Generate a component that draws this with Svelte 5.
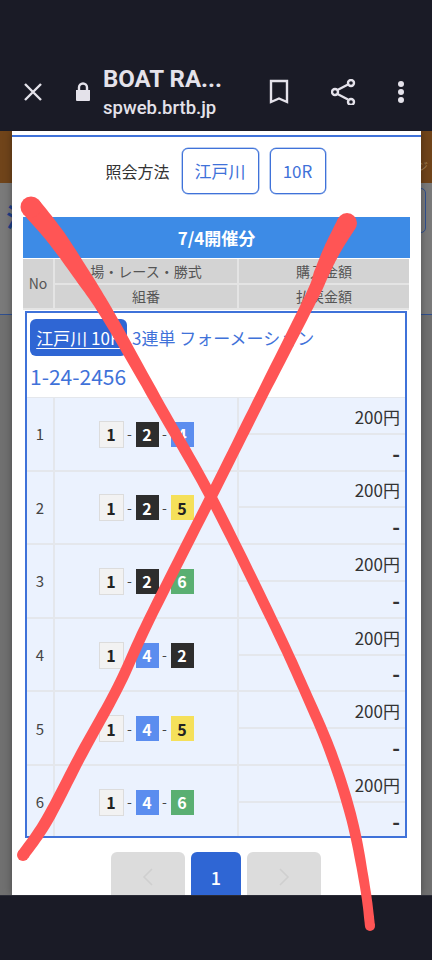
<script lang="ts">
    const rows = [
        { no: 1, boats: [1, 2, 4] },
        { no: 2, boats: [1, 2, 5] },
        { no: 3, boats: [1, 2, 6] },
        { no: 4, boats: [1, 4, 2] },
        { no: 5, boats: [1, 4, 5] },
        { no: 6, boats: [1, 4, 6] }
    ];

    // [x, y, width] along the hand-drawn strokes
    const strokeA = [[31, 207, 21], [55, 236, 19], [80, 272, 16.5], [109, 317, 13.5], [160, 407, 11.5], [211, 497, 11], [272, 620, 10.5], [303, 687, 10.5], [331, 753, 11], [352, 820, 11], [365, 887, 10], [370, 926, 10]];
    const strokeB = [[347, 223, 20], [333, 248, 17], [322, 272, 15], [311, 298, 13], [262, 395, 11.5], [211, 497, 11], [149, 620, 11], [118, 687, 11], [82, 753, 11.5], [47, 820, 12], [23, 855, 12]];

    // catmull-rom so the strokes come out curved, not kinked
    function sample(pts: number[][]) {
        const out: number[][] = [];
        for (let i = 0; i < pts.length - 1; i++) {
            const p0 = pts[Math.max(i - 1, 0)];
            const p1 = pts[i];
            const p2 = pts[i + 1];
            const p3 = pts[Math.min(i + 2, pts.length - 1)];
            for (let s = 0; s < 12; s++) {
                const t = s / 12;
                out.push([0, 1, 2].map(k =>
                    0.5 * (2 * p1[k] + (p2[k] - p0[k]) * t +
                    (2 * p0[k] - 5 * p1[k] + 4 * p2[k] - p3[k]) * t * t +
                    (3 * p1[k] - p0[k] - 3 * p2[k] + p3[k]) * t * t * t)));
            }
        }
        out.push(pts[pts.length - 1]);
        return out;
    }

    function taper(raw: number[][]) {
        const pts = sample(raw);
        const left: string[] = [];
        const right: string[] = [];
        pts.forEach((p, i) => {
            const a = pts[Math.max(i - 1, 0)];
            const b = pts[Math.min(i + 1, pts.length - 1)];
            const dx = b[0] - a[0];
            const dy = b[1] - a[1];
            const len = Math.hypot(dx, dy);
            const nx = (-dy / len) * p[2] / 2;
            const ny = (dx / len) * p[2] / 2;
            left.push(`${(p[0] + nx).toFixed(1)} ${(p[1] + ny).toFixed(1)}`);
            right.unshift(`${(p[0] - nx).toFixed(1)} ${(p[1] - ny).toFixed(1)}`);
        });
        return 'M' + left.concat(right).join(' L') + ' Z';
    }
</script>

<div class="screen">
    <header class="topbar">
        <svg class="close" viewBox="0 0 20 20" width="20" height="20"><path d="M2 2 L18 18 M18 2 L2 18" /></svg>
        <svg class="lock" viewBox="0 0 16 20" width="16" height="20">
            <path class="fill" d="M1 8 H15 V18 Q15 19 14 19 H2 Q1 19 1 18 Z" />
            <path d="M4 8 V5.5 a4 4 0 0 1 8 0 V8" />
        </svg>
        <div class="title">
            <div class="name">BOAT RA...</div>
            <div class="url">spweb.brtb.jp</div>
        </div>
        <svg class="bookmark" viewBox="0 0 20 26" width="20" height="26"><path d="M2 2 H18 V23 L10 19.5 L2 23 Z" /></svg>
        <svg class="share" viewBox="0 0 26 26" width="26" height="26">
            <path d="M6.5 11 L17 5.5 M6.5 15 L17 20.5" />
            <circle cx="20" cy="4" r="3" /><circle cx="4" cy="13" r="3" /><circle cx="20" cy="23" r="3" />
        </svg>
        <div class="dots"><span></span><span></span><span></span></div>
    </header>

    <main class="viewport">
        <div class="page">
            <div class="banner"><span>ジ</span></div>
            <div class="page-head">
                <div class="page-title">江戸川</div>
                <div class="page-box"></div>
            </div>
            <div class="page-rest"></div>
        </div>

        <section class="modal">
            <div class="query">
                <span class="query-label">照会方法</span>
                <button class="pick wide">江戸川</button>
                <button class="pick">10R</button>
            </div>

            <div class="day">7/4開催分</div>

            <table class="head">
                <tbody>
                    <tr><td class="no" rowspan="2">No</td><td class="c2">場・レース・勝式</td><td class="c3">購入金額</td></tr>
                    <tr><td class="c2">組番</td><td class="c3">払戻金額</td></tr>
                </tbody>
            </table>

            <div class="ticket">
                <div class="ticket-title">
                    <div class="line"><span class="venue">江戸川 10R</span><span class="kind">3連単 フォーメーション</span></div>
                    <div class="combo">1-24-2456</div>
                </div>
                <table class="bets">
                    <tbody>
                        {#each rows as row}
                            <tr>
                                <td class="no" rowspan="2">{row.no}</td>
                                <td class="boats" rowspan="2">
                                    <div class="boat-row">
                                        {#each row.boats as b, i}
                                            {#if i > 0}<span class="dash">-</span>{/if}
                                            <span class="boat b{b}">{b}</span>
                                        {/each}
                                    </div>
                                </td>
                                <td class="amount">200円</td>
                            </tr>
                            <tr><td class="amount payout">-</td></tr>
                        {/each}
                    </tbody>
                </table>
            </div>

            <nav class="pager">
                <div class="pg off"><svg viewBox="0 0 12 20" width="12" height="20"><path d="M10 2 L2 10 L10 18" /></svg></div>
                <div class="pg on">1</div>
                <div class="pg off"><svg viewBox="0 0 12 20" width="12" height="20"><path d="M2 2 L10 10 L2 18" /></svg></div>
            </nav>
        </section>
    </main>

    <footer class="bottombar"></footer>

    <svg class="scribble" viewBox="0 0 432 960" width="432" height="960">
        <path d={taper(strokeA)} />
        <path d={taper(strokeB)} />
        <circle cx="31" cy="207" r="10.5" /><circle cx="370" cy="926" r="5" />
        <circle cx="347" cy="223" r="10" /><circle cx="23" cy="855" r="6" />
    </svg>
</div>

<style>
    :global(body) { margin: 0; background: #1a1b26; }
    .screen { position: relative; width: 432px; height: 960px; display: flex; flex-direction: column; overflow: hidden; background: #1a1b26; font-family: "Noto Sans CJK JP", "Noto Sans", sans-serif; color: #333; }

    .topbar { height: 131px; box-sizing: border-box; padding: 53px 0 0 24px; display: flex; align-items: center; color: #e4e2ea; flex: none; }
    .topbar svg path, .topbar svg circle { fill: none; stroke: #e4e2ea; stroke-width: 2.4; }
    .close { flex: none; margin-left: -1px; }
    .lock { flex: none; margin: 0 0 0 32px; }
    .topbar svg .fill { fill: #e4e2ea; stroke: none; }
    .title { width: 163px; margin-left: 12px; font-family: Roboto, sans-serif; }
    .name { font-size: 24px; font-weight: 700; line-height: 30px; white-space: nowrap; }
    .url { font-size: 18.5px; font-weight: 500; line-height: 24px; margin-top: 2px; white-space: nowrap; }
    .bookmark { flex: none; margin-left: 3px; }
    .share { flex: none; margin-left: 42px; }
    .dots { flex: none; margin-left: 41px; display: flex; flex-direction: column; gap: 2px; }
    .dots span { width: 6px; height: 6px; border-radius: 50%; background: #e4e2ea; }

    .viewport { position: relative; flex: 1; overflow: hidden; }
    .page { height: 100%; display: flex; flex-direction: column; background: #7a7a7a; }
    .banner { height: 52px; background: #70441a; display: flex; justify-content: flex-end; align-items: center; padding: 18px 4px 0 0; box-sizing: border-box; color: #a8885f; font-size: 11px; }
    .page-head { height: 132px; display: flex; justify-content: space-between; align-items: flex-start; border-bottom: 1px solid #2f4f8f; box-sizing: border-box; }
    .page-title { margin: 14px 0 0 6px; font-size: 26px; font-weight: 700; color: #1e3f87; }
    .page-box { width: 26px; height: 45px; margin: 5px 6px 0 0; border: 1px solid #2f5090; border-radius: 5px; box-sizing: border-box; }
    .page-rest { flex: 1; background: #707070; }

    .modal { position: absolute; top: 0; left: 12px; width: 409px; height: 100%; box-sizing: border-box; background: #fff; padding: 3.5px 11px 0; box-shadow: 0 0 8px rgba(0,0,0,.35); }
    .modal::before { content: ""; display: block; height: 2px; margin: 0 -11px; background: #3f72d9; }
    .query { display: flex; align-items: center; justify-content: center; gap: 11px; height: 46px; margin-top: 11px; padding-right: 2px; }
    .query-label { font-size: 16px; color: #333; margin-right: 1px; }
    .pick { width: 56px; height: 46px; background: #fff; border: 1px solid #3f72d9; border-radius: 6px; color: #3f72d9; font: 17px "Noto Sans CJK JP", sans-serif; padding: 0; box-shadow: 0 0 0 .5px #7a9fe6; }
    .pick.wide { width: 77px; }
    .day { height: 41px; margin-top: 23px; background: #3d8be6; color: #fff; font-size: 17px; font-weight: 700; display: flex; align-items: center; justify-content: center; }

    table { border-collapse: collapse; table-layout: fixed; width: 100%; }
    .head { width: 386px; background: #d3d3d3; margin-top: 1px; }
    .head td { height: 25px; box-sizing: border-box; padding: 0; border: 2px solid #e4e4e4; border-width: 0 2px 2px 0; font-size: 14px; line-height: 1; text-align: center; color: #555; }
    .head .no { width: 31px; }
    .head .c2 { width: 184px; }
    .head td:last-child { border-right: 0; }

    .ticket { margin: 1px 2px 0; border: 2px solid #3f72d9; width: 382px; box-sizing: border-box; height: 527px; overflow: hidden; }
    .ticket-title { height: 84px; box-sizing: border-box; padding: 6px 3px 0; color: #3f72d9; }
    .line { display: flex; align-items: center; height: 37px; }
    .venue { height: 37px; width: 97px; box-sizing: border-box; flex: none; background: #2f66d4; border-radius: 6px; color: #fff; font-size: 17px; line-height: 37px; text-align: center; white-space: nowrap; }
    .venue { text-decoration: underline; text-underline-offset: 3px; }
    .kind { font-size: 17px; margin-left: 5px; white-space: nowrap; }
    .combo { font-size: 21px; line-height: 30px; margin-top: 5px; }

    .bets { background: #ebf2fe; }
    .bets td { border: 2px solid #e4e7ec; padding: 0; height: 36.8px; box-sizing: border-box; }
    .bets tr:first-child td { border-top: 1px solid #e4e7ec; }
    .bets .no { width: 27px; text-align: center; font-size: 15px; color: #444; border-left: 0; }
    .bets .boats { width: 184px; }
    .bets .amount { text-align: right; padding: 2px 5px 0 0; font-size: 17px; line-height: 1; color: #333; border-right: 0; }
    .bets .payout { font-size: 21px; font-weight: 700; }
    .boat-row { display: flex; align-items: center; justify-content: center; padding: 1px 0 0 0; }
    .dash { width: 12px; text-align: center; font-size: 14px; color: #444; margin-top: -2px; }
    .boat { width: 23px; height: 25px; display: flex; align-items: center; justify-content: center; box-sizing: border-box; font-size: 16px; font-weight: 700; line-height: 1; }
    .b1 { width: 25px; height: 27px; background: #f2f2f2; border: 1.5px solid #dcdcdc; color: #222; }
    .b2 { background: #2d2d2d; color: #fff; }
    .b4 { background: #5b8def; color: #fff; }
    .b5 { background: #f5e05a; color: #222; }
    .b6 { background: #5aaf72; color: #fff; }

    .pager { display: flex; justify-content: center; gap: 6px; margin-top: 14px; padding-right: 1px; }
    .pg { height: 50px; border-radius: 6px; display: flex; align-items: center; justify-content: center; }
    .pg.off { width: 74px; background: #dcdcdc; }
    .pg.off svg path { fill: none; stroke: #cfcfcf; stroke-width: 1.5; }
    .pg.on { width: 50px; background: #2f66d4; color: #fff; font-size: 18px; font-weight: 500; }

    .bottombar { height: 65px; flex: none; background: #1a1b26; border-top: 1px solid #2a2b36; box-sizing: border-box; }
    .scribble { position: absolute; top: 0; left: 0; pointer-events: none; }
    .scribble path, .scribble circle { fill: #ff5555; }
</style>
